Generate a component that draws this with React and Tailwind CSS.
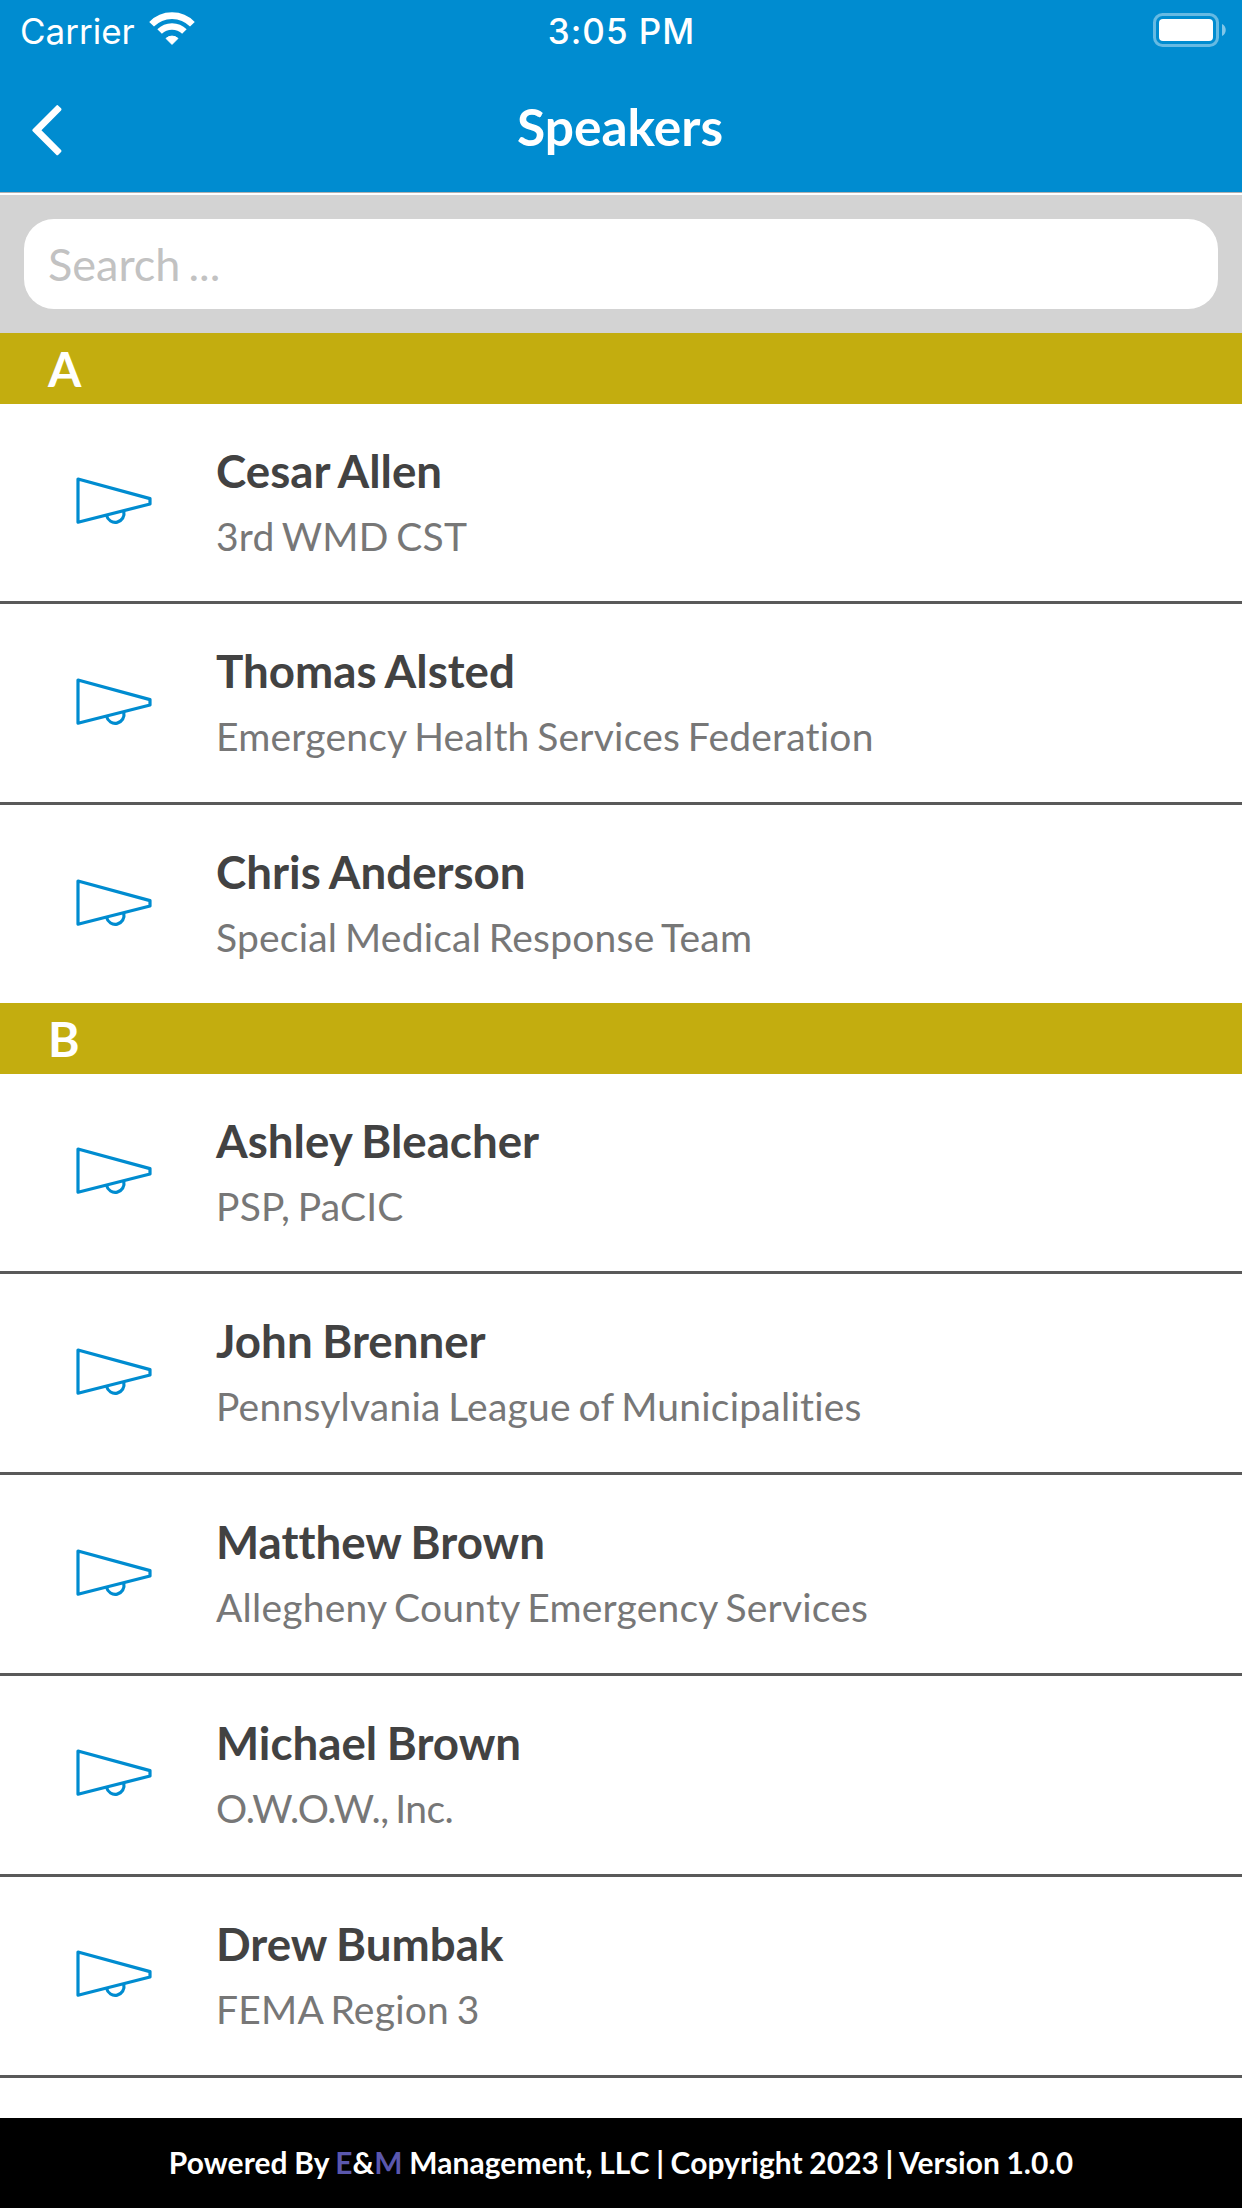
import React from 'react';
import clsx from 'clsx';

const sections = [
    {
        letter: "A",
        speakers: [
            { name: "Cesar Allen", org: "3rd WMD CST" },
            { name: "Thomas Alsted", org: "Emergency Health Services Federation" },
            { name: "Chris Anderson", org: "Special Medical Response Team" }
        ]
    },
    {
        letter: "B",
        speakers: [
            { name: "Ashley Bleacher", org: "PSP, PaCIC" },
            { name: "John Brenner", org: "Pennsylvania League of Municipalities" },
            { name: "Matthew Brown", org: "Allegheny County Emergency Services" },
            { name: "Michael Brown", org: "O.W.O.W., Inc.", tight: true },
            { name: "Drew Bumbak", org: "FEMA Region 3" },
            { name: "", org: "" }
        ]
    }
];

const WifiIcon = () => (
    <svg className="-mt-0.5" width="48" height="36" viewBox="148 12 48 36" fill="none" stroke="white">
        <path d="M151.6 25.3A28.3 28.3 0 0 1 192.4 25.3" strokeWidth="6.6" />
        <path d="M159.6 32.6A17.5 17.5 0 0 1 184.4 32.6" strokeWidth="6.4" />
        <path d="M172 45.4L166 39.4A9 9 0 0 1 178 39.4Z" fill="white" strokeWidth="1" strokeLinejoin="round" />
    </svg>
);

const BatteryIcon = () => (
    <svg width="74" height="34" viewBox="0 0 74 34" fill="none">
        <rect x="1.5" y="1.5" width="63" height="31" rx="8" stroke="white" strokeOpacity="0.4" strokeWidth="3" />
        <rect x="6" y="6" width="54" height="22" rx="4" fill="white" />
        <path d="M69 11C74 13 74 21 69 23Z" fill="white" fillOpacity="0.5" />
    </svg>
);

const BackIcon = () => (
    <svg width="32" height="52" viewBox="31 104 32 52" fill="white" stroke="white" strokeWidth="3" strokeLinejoin="round">
        <path d="M33.8 130.2L57.3 106.7L60 109.4L39.4 130.2L60 151L57.3 153.7Z" />
    </svg>
);

const MegaphoneIcon = () => (
    <svg className="mt-[66.5px] shrink-0" width="84" height="60" viewBox="72 470 84 60" fill="none" stroke="#008cd0" strokeWidth="3.2" strokeLinejoin="round">
        <path d="M78 479L150 498.6V504L78 522.2Z" />
        <path d="M106.6 515.5A8.8 8.8 0 1 0 123.8 511.5" />
    </svg>
);

const Header = () => (
    <header className="shrink-0 bg-[#008cd0] text-white">
        {/* Status bar */}
        <div className="grid h-[60px] grid-cols-[1fr_auto_1fr] items-center pb-0.5 pl-5 pr-[15px] font-['Inter',sans-serif] text-[35px]">
            <div className="flex items-center gap-[13px]">
                <span className="pt-[3px] leading-[57px]">Carrier</span>
                <WifiIcon />
            </div>
            <span className="pt-[2px] -ml-1 text-center font-medium leading-[56px] tracking-[1px]">3:05 PM</span>
            <div className="flex justify-end">
                <BatteryIcon />
            </div>
        </div>

        {/* Title bar */}
        <div className="grid h-[132px] grid-cols-3 items-center pl-[30px] pr-8">
            <button type="button" aria-label="Back" className="justify-self-start pl-px pt-2">
                <BackIcon />
            </button>
            <h1 className="text-center text-[51.5px] font-bold leading-[60px]">Speakers</h1>
        </div>
        <div className="h-[3px] border-t border-[#b0b0b0] bg-white" />
    </header>
);

const SearchBar = () => (
    <div className="flex h-[138px] shrink-0 items-center bg-[#d3d3d3] px-6">
        <input
            type="text"
            placeholder="Search ..."
            aria-label="Search"
            className="h-[90px] w-full rounded-[30px] bg-white px-6 text-[45px] [word-spacing:-3.5px] placeholder:text-[#c2c2c2]"
        />
    </div>
);

const SpeakerRow = ({ name, org, tight }) => (
    <li className="border-b-[3px] border-[#595959] pl-[72px] last:border-b-0">
        <div className="flex h-[197.8px] gap-[60px]">
            <MegaphoneIcon />
            <div className="pt-[37px]">
                <h3 className="text-[45.7px] font-bold leading-[60px] text-[#424242] [word-spacing:-1.5px]">{name}</h3>
                <p className={clsx("mt-2 text-[39px] leading-[54px] text-[#777777] [word-spacing:-2.5px]", tight ? "tracking-[-0.6px]" : "tracking-[0.22px]")}>
                    {org}
                </p>
            </div>
        </div>
    </li>
);

const Footer = () => (
    <footer className="flex h-[90px] shrink-0 items-center justify-center bg-black pb-0.5 text-[29.9px] font-bold tracking-[0.1px] text-white [word-spacing:-0.8px]">
        <p>
            Powered By <span className="text-[#5a57ad]">E</span>&amp;<span className="text-[#5a57ad]">M</span> Management, LLC | Copyright 2023 | Version 1.0.0
        </p>
    </footer>
);

const App = () => (
    <div className="flex h-screen flex-col overflow-hidden bg-white font-['Lato',sans-serif] [font-variant-ligatures:none]">
        <Header />
        <SearchBar />
        <main className="min-h-0 flex-1 overflow-hidden">
            {sections.map((section) => (
                <section key={section.letter}>
                    <h2 className="h-[70.6px] bg-[#c3ad0f] px-12 text-[48px] font-bold leading-[72px] text-white">{section.letter}</h2>
                    <ul>
                        {section.speakers.map((speaker, i) => (
                            <SpeakerRow key={i} {...speaker} />
                        ))}
                    </ul>
                </section>
            ))}
        </main>
        <Footer />
    </div>
);

export default App;
